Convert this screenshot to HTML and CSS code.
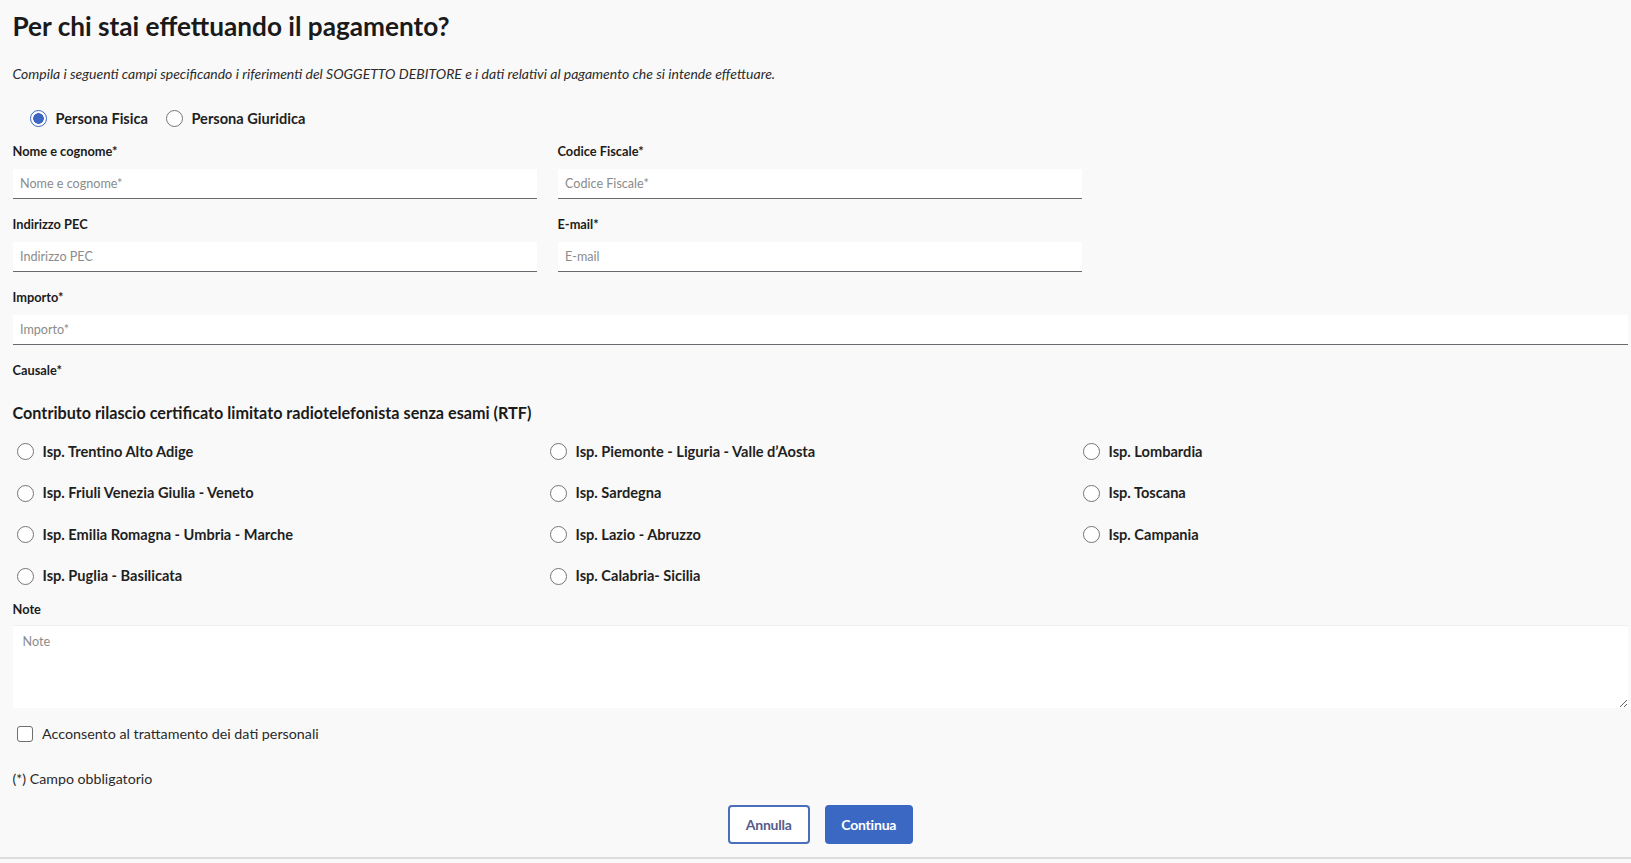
FILE: index.html
```html
<!DOCTYPE html>
<html lang="it">
<head>
<meta charset="utf-8">
<title>Pagamento</title>
<link rel="stylesheet" href="styles.css">
</head>
<body>
<main class="page">
  <h1 class="title">Per chi stai effettuando il pagamento?</h1>
  <p class="intro">Compila i seguenti campi specificando i riferimenti del SOGGETTO DEBITORE e i dati relativi al pagamento che si intende effettuare.</p>

  <div class="type-row">
    <label class="choice"><input type="radio" class="radio" name="tipo" checked><span>Persona Fisica</span></label>
    <label class="choice"><input type="radio" class="radio" name="tipo"><span>Persona Giuridica</span></label>
  </div>

  <div class="field-grid">
    <div class="field">
      <label class="field-label">Nome e cognome*</label>
      <input class="text-input" type="text" placeholder="Nome e cognome*">
    </div>
    <div class="field">
      <label class="field-label">Codice Fiscale*</label>
      <input class="text-input" type="text" placeholder="Codice Fiscale*">
    </div>
    <div class="field">
      <label class="field-label">Indirizzo PEC</label>
      <input class="text-input" type="text" placeholder="Indirizzo PEC">
    </div>
    <div class="field">
      <label class="field-label">E-mail*</label>
      <input class="text-input" type="text" placeholder="E-mail">
    </div>
  </div>

  <div class="field field-wide">
    <label class="field-label">Importo*</label>
    <input class="text-input" type="text" placeholder="Importo*">
  </div>

  <div class="field-label causale">Causale*</div>
  <h2 class="causale-title">Contributo rilascio certificato limitato radiotelefonista senza esami (RTF)</h2>

  <div class="option-grid">
    <label class="option"><input type="radio" class="radio" name="isp"><span>Isp. Trentino Alto Adige</span></label>
    <label class="option"><input type="radio" class="radio" name="isp"><span>Isp. Piemonte - Liguria - Valle d’Aosta</span></label>
    <label class="option"><input type="radio" class="radio" name="isp"><span>Isp. Lombardia</span></label>
    <label class="option"><input type="radio" class="radio" name="isp"><span>Isp. Friuli Venezia Giulia - Veneto</span></label>
    <label class="option"><input type="radio" class="radio" name="isp"><span>Isp. Sardegna</span></label>
    <label class="option"><input type="radio" class="radio" name="isp"><span>Isp. Toscana</span></label>
    <label class="option"><input type="radio" class="radio" name="isp"><span>Isp. Emilia Romagna - Umbria - Marche</span></label>
    <label class="option"><input type="radio" class="radio" name="isp"><span>Isp. Lazio - Abruzzo</span></label>
    <label class="option"><input type="radio" class="radio" name="isp"><span>Isp. Campania</span></label>
    <label class="option"><input type="radio" class="radio" name="isp"><span>Isp. Puglia - Basilicata</span></label>
    <label class="option"><input type="radio" class="radio" name="isp"><span>Isp. Calabria- Sicilia</span></label>
  </div>

  <label class="field-label note-label">Note</label>
  <textarea class="note-area" placeholder="Note"></textarea>

  <label class="consent"><input type="checkbox" class="check"><span>Acconsento al trattamento dei dati personali</span></label>

  <p class="required">(*) Campo obbligatorio</p>

  <div class="actions">
    <button class="btn btn-outline" type="button">Annulla</button>
    <button class="btn btn-primary" type="button">Continua</button>
  </div>
</main>
<div class="bottom-rule"></div>
</body>
</html>
```

FILE: styles.css
```css
html, body {
  margin: 0;
  padding: 0;
  background: #f9f9f9;
}

body {
  font-family: Lato, "Noto Sans", "DejaVu Sans", sans-serif;
  color: #1b1b1b;
  height: 863px;
  overflow: hidden;
}

.page {
  padding: 9px 3px 0 12.5px;
}

.title {
  margin: 0;
  font-size: 26.2px;
  line-height: 34px;
  font-weight: 700;
  color: #1a1a1a;
}

.intro {
  margin: 21px 0 0;
  font-size: 14px;
  line-height: 20px;
  font-style: italic;
  color: #2b2b2b;
}

.type-row {
  margin-top: 22.5px;
  padding-left: 17.5px;
  display: flex;
  align-items: center;
  gap: 18px;
  height: 24px;
}

.choice,
.option {
  display: flex;
  align-items: center;
  gap: 8.5px;
  font-size: 14.6px;
  font-weight: 700;
  color: #1f1f1f;
  line-height: 24px;
}

.radio {
  appearance: none;
  -webkit-appearance: none;
  margin: 0;
  width: 17px;
  height: 17px;
  border: 1.3px solid #757575;
  border-radius: 50%;
  background: #ffffff;
  box-sizing: border-box;
  flex: none;
}

.radio:checked {
  border: 1.5px solid #3d67c2;
  background: radial-gradient(circle, #3d67c2 0 5px, #ffffff 5.6px);
}

.field-grid {
  margin-top: 11.5px;
  display: grid;
  grid-template-columns: 524.5px 524.5px;
  column-gap: 20.5px;
  row-gap: 16px;
}

.field {
  display: flex;
  flex-direction: column;
}

.field-wide {
  margin-top: 16px;
}

.field-label {
  display: block;
  font-size: 12.8px;
  line-height: 18px;
  font-weight: 700;
  color: #1c1c1c;
}

.text-input {
  margin-top: 8.5px;
  height: 30.5px;
  box-sizing: border-box;
  border: none;
  border-bottom: 1.5px solid #666a6e;
  background: #ffffff;
  padding: 0 7.5px;
  font-family: inherit;
  font-size: 12.6px;
  color: #1c1c1c;
  outline: none;
}

.text-input::placeholder,
.note-area::placeholder {
  color: #8b8b8b;
  font-weight: 400;
}

.causale {
  margin-top: 16px;
}

.causale-title {
  margin: 22px 0 0;
  font-size: 16.2px;
  line-height: 24px;
  font-weight: 700;
  color: #1b1b1b;
}

.option-grid {
  margin-top: 14.5px;
  padding-left: 4.5px;
  display: grid;
  grid-template-columns: repeat(3, 533px);
  row-gap: 17.5px;
}

.note-label {
  margin-top: 11.5px;
}

.note-area {
  display: block;
  margin-top: 7.5px;
  width: 100%;
  height: 83px;
  box-sizing: border-box;
  border: none;
  border-top: 1px solid #f0f0f0;
  background: #ffffff;
  padding: 8px 10px;
  font-family: inherit;
  font-size: 12.6px;
  outline: none;
}

.consent {
  margin-top: 14px;
  padding-left: 4.5px;
  display: flex;
  align-items: center;
  gap: 9px;
  font-size: 14.3px;
  line-height: 24px;
  color: #2a2a2a;
}

.check {
  appearance: none;
  -webkit-appearance: none;
  margin: 0;
  width: 16px;
  height: 16px;
  box-sizing: border-box;
  border: 1.5px solid #6f6f6f;
  border-radius: 3px;
  background: #ffffff;
  flex: none;
}

.required {
  margin: 23px 0 0;
  font-size: 14.2px;
  line-height: 20px;
  color: #2a2a2a;
}

.actions {
  margin-top: 16px;
  display: flex;
  justify-content: center;
  gap: 15px;
}

.btn {
  height: 39px;
  box-sizing: border-box;
  border-radius: 4px;
  font-family: inherit;
  font-size: 14px;
  font-weight: 700;
  letter-spacing: -0.2px;
  cursor: pointer;
}

.btn-outline {
  width: 82px;
  background: #ffffff;
  border: 2px solid #4a6fba;
  color: #555c8c;
}

.btn-primary {
  width: 88px;
  background: #3b68c3;
  border: 2px solid #3b68c3;
  color: #ffffff;
}

.bottom-rule {
  position: absolute;
  left: 0;
  right: 0;
  top: 857px;
  height: 2px;
  background: #dcdcdc;
}
```
